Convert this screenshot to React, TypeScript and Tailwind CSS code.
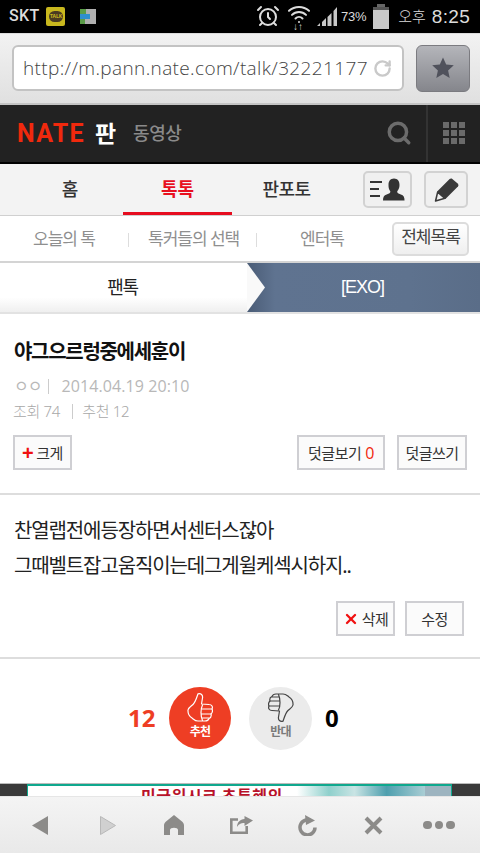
import React from "react";
import { AlarmClock, Wifi, RotateCw, X, Search } from "lucide-react";

const kr = "font-['Noto_Sans','Noto_Sans_CJK_KR',sans-serif]";

const thumb =
  "M11 .8C14 0 16 2 15.500 5L14.500 11L22 11.500C25 11.500 26 14 25 16C26 18 25 20 24 21C24.500 23 23.500 25 22 25.500C21.500 27 20.500 28 18 28L11 28C8 28 7 26.500 5 25C2.500 23.500 .8 20 1 17C1.500 14.500 4.500 13 6 11.500C8.500 9 9.500 5 11 .8z";
const fingers = "M15.500 12C13.500 16 13.500 23 15.500 27.500M15 16H25M14.500 21H24M15 25H22";

function StatusBar() {
  return (
    <div className="flex h-[33px] items-center bg-black pl-[9px] pr-[10px] text-[#dcdcdc]">
      <span className="font-['Roboto',sans-serif] text-[16px] font-medium leading-none tracking-[0.3px]">SKT</span>
      <div className="ml-[7px] flex h-[19px] w-[19px] items-center justify-center rounded-[2px] bg-[#c9b81e]">
        <div className="flex h-[11px] w-[14px] items-center justify-center rounded-full bg-[#4a3b22] text-[5px] font-bold leading-none text-[#c9b81e]">TALK</div>
      </div>
      <div className="ml-[15px] flex w-[16px] flex-col">
        <div className="h-[5px] bg-[linear-gradient(90deg,#5a9c48_40%,#b0b0b0_40%)]" />
        <div className="h-[5px] bg-[linear-gradient(90deg,#2f8fcf_60%,#b0b0b0_60%)]" />
        <div className="h-[5px] bg-[linear-gradient(90deg,#5a9c48_30%,#b0b0b0_30%)]" />
      </div>
      <div className="ml-auto flex items-center">
        <AlarmClock size={24} strokeWidth={2} className="text-[#dcdcdc]" />
        <div className="relative ml-[8px] h-[24px] w-[22px]">
          <Wifi size={24} strokeWidth={2} className="absolute -left-[1px] -top-[2px]" />
          <span className="absolute bottom-[-3px] left-[5px] text-[10px] font-bold leading-none">↓↑</span>
        </div>
        <svg width="20" height="22" viewBox="0 0 20 22" className="ml-[7px]">
          <path d="M0 21h3v-3zM5 21h4v-8l-4 4zM10.500 21h4V8l-4 4zM16.500 21h3.500V2l-3.500 4z" fill="#c8c8c8" />
        </svg>
        <span className="ml-[4px] font-['Liberation_Sans',sans-serif] text-[13px] leading-none tracking-[-0.3px]">73%</span>
        <div className="ml-[7px] flex flex-col items-center">
          <div className="h-[3px] w-[8px] bg-[#666]" />
          <div className="h-[22px] w-[16px] bg-[linear-gradient(180deg,#555_15%,#c9c9c9_15%)]" />
        </div>
        <span className={`ml-[9px] ${kr} text-[15px] font-light leading-none`}>오후</span>
        <span className="ml-[6px] font-['Liberation_Sans',sans-serif] text-[19px] leading-none tracking-[0.3px]">8:25</span>
      </div>
    </div>
  );
}

function UrlBar() {
  return (
    <div className="flex h-[72px] items-center gap-[12px] border-b-[2px] border-t-[1px] border-[#c4c4c4] border-t-[#dcdcdc] bg-[linear-gradient(180deg,#f2f2f2,#e0e0e0)] pl-[12px] pr-[10px]">
      <div className="flex h-[46px] min-w-0 flex-1 items-center rounded-[6px] border-2 border-[#c3c3c3] bg-white pl-[9px] pr-[10px]">
        <span className="flex-1 whitespace-nowrap font-['Open_Sans',sans-serif] text-[19px] font-light tracking-[0.37px] text-[#444]">http://m.pann.nate.com/talk/32221177</span>
        <RotateCw size={19} strokeWidth={3} className="shrink-0 text-[#c9c9c9]" />
      </div>
      <div className="flex h-[47px] w-[54px] items-center justify-center rounded-[6px] border border-[#7b7b80] bg-[linear-gradient(180deg,#b4b5ba,#85868c)]">
        <svg width="24" height="24" viewBox="0 0 24 24">
          <path d="M12 1.500l3.200 7 7.600.8-5.700 5.100 1.600 7.600-6.700-3.900L5.300 22l1.600-7.600L1.200 9.300l7.600-.8z" fill="#50525c" />
        </svg>
      </div>
    </div>
  );
}

function NateHeader() {
  return (
    <div className="flex h-[59px] items-center border-b-[2px] border-black bg-[#222222]">
      <span className="ml-[17px] font-['Roboto',sans-serif] text-[25px] font-bold leading-none tracking-[1.3px] text-[#f0290d]">NATE</span>
      <span className={`ml-[10px] ${kr} text-[23px] font-bold leading-none text-white`}>판</span>
      <span className={`ml-[17px] ${kr} text-[18px] font-medium leading-none tracking-[-0.5px] text-[#8a8a8a]`}>동영상</span>
      <Search size={26} strokeWidth={3.200} className="ml-auto text-[#6c6c6c]" />
      <div className="ml-[14px] flex h-full w-[54px] items-center justify-center border-l-[2px] border-[#333333]">
        <div className="grid grid-cols-3 gap-[2px]">
          {Array.from({ length: 9 }).map((_, i) => (
            <div key={i} className="h-[6px] w-[6px] bg-[#6a6a6a]" />
          ))}
        </div>
      </div>
    </div>
  );
}

function MainNav() {
  return (
    <div className="flex h-[52px] items-stretch border-b border-[#d0d0d0] bg-[#f3f3f3]">
      <div className={`flex w-[123px] items-center justify-center pl-[17px] ${kr} text-[18px] font-medium text-[#333]`}>홈</div>
      <div className={`flex w-[109px] items-center justify-center border-b-[3px] border-[#e60d1f] pt-[3px] ${kr} text-[18px] font-bold text-[#e8101f]`}>톡톡</div>
      <div className={`flex w-[109px] items-center justify-center ${kr} text-[18px] font-medium tracking-[-0.5px] text-[#333]`}>판포토</div>
      <div className="ml-[22px] mt-[7px] flex h-[37px] w-[49px] items-center justify-center gap-[1px] rounded-[5px] border-2 border-[#d2d2d2] bg-[#f0f0f0]">
        <div className="flex flex-col gap-[5px]">
          <div className="h-[2px] w-[12px] bg-[#333]" />
          <div className="h-[2px] w-[9px] bg-[#333]" />
          <div className="h-[2px] w-[10px] bg-[#333]" />
        </div>
        <svg width="22" height="25" viewBox="0 0 24 26">
          <path d="M12 1c4 0 6 3 6 7 0 3-1 5-2.500 7 0 2 1 2.500 4 3.500 3 1 4 3 4 6.500H0c0-3.500 1-5.500 4-6.500s4-1.500 4-3.500C6.500 13 6 11 6 8c0-4 2-7 6-7z" fill="#333" />
        </svg>
      </div>
      <div className="ml-[12px] mt-[7px] flex h-[37px] w-[44px] items-center justify-center rounded-[5px] border-2 border-[#d2d2d2] bg-[#f0f0f0]">
        <svg width="25" height="25" viewBox="0 0 24 24">
          <path d="M17 1.500L23 6.500Q24 8 23 9L11 21L3 14L15 2Q16 1 17 1.500z" fill="#3a3a3a" />
          <path d="M3.500 14.500L10.500 20.500L1.500 23z" fill="#eeeeee" stroke="#3a3a3a" strokeWidth="1.500" strokeLinejoin="round" />
        </svg>
      </div>
    </div>
  );
}

function SubNav() {
  return (
    <div className={`flex h-[48px] items-center border-b-[2px] border-[#d4d4d4] bg-white ${kr} text-[17px] tracking-[-1px] text-[#8f8f8f]`}>
      <span className="ml-[33px] w-[95px]">오늘의 톡</span>
      <div className="mt-[3px] h-[14px] w-px bg-[#dddddd]" />
      <span className="ml-[19px] w-[108px] whitespace-nowrap">톡커들의 선택</span>
      <div className="mt-[3px] h-[14px] w-px bg-[#dddddd]" />
      <span className="ml-[43px] w-[60px]">엔터톡</span>
      <div className="ml-auto mr-[11px] flex h-[34px] w-[77px] items-center justify-center rounded-[5px] border-2 border-[#dcdcdc] bg-[linear-gradient(180deg,#ffffff,#efefef)] pb-[3px] text-[17px] text-[#444]">전체목록</div>
    </div>
  );
}

function Breadcrumb() {
  return (
    <div className={`relative flex h-[51px] border-b-[2px] border-[#e2e2e2] ${kr}`}>
      <div className="flex w-[247px] items-center justify-center bg-[linear-gradient(180deg,#ffffff_70%,#efefef)] pr-[2px] text-[18px] tracking-[-1.3px] text-[#222]">팬톡</div>
      <div className="flex flex-1 items-center justify-center bg-[linear-gradient(90deg,#4a5c76,#5f7390_12%,#5e728e_70%,#5a6d88)] pr-[2px] font-['Liberation_Sans',sans-serif] text-[18px] tracking-[-1px] text-white">[EXO]</div>
      <svg width="22" height="49" viewBox="0 0 22 49" className="absolute left-[247px] top-0">
        <path d="M0 0L18 24.500L0 49z" fill="#f9f9f9" />
      </svg>
    </div>
  );
}

function Btn({ className, children }: { className: string; children: React.ReactNode }) {
  return (
    <div className={`flex h-[35px] items-center justify-center border-2 border-[#cfcfd3] bg-[#fbfbfb] ${kr} text-[15px] tracking-[-0.5px] text-[#333] ${className}`}>
      {children}
    </div>
  );
}

function Article() {
  return (
    <div className={`border-b-[2px] border-[#dddddd] px-[13px] pb-[23px] pt-[23px] ${kr}`}>
      <div className="ml-[1px] text-[20px] font-bold leading-[30px] tracking-[-1.3px] text-[#111]">야그으르렁중에세훈이</div>
      <div className="ml-[1px] mt-[9px] flex h-[20px] items-center text-[16px] text-[#b8b8b8]">
        <span className="text-[16px] tracking-[-1px]">ㅇㅇ</span>
        <div className="ml-[7px] h-[15px] w-px bg-[#cccccc]" />
        <span className="ml-[12px] font-['Open_Sans',sans-serif] tracking-[0.1px]">2014.04.19 20:10</span>
      </div>
      <div className="mt-[5px] flex h-[20px] items-center text-[15px] font-light tracking-[-0.3px] text-[#a8a8a8]">
        <span>조회 74</span>
        <div className="ml-[12px] h-[15px] w-px bg-[#cccccc]" />
        <span className="ml-[9px]">추천 12</span>
      </div>
      <div className="mt-[14px] flex">
        <Btn className="w-[59px] gap-[3px]">
          <span className="font-['Liberation_Sans',sans-serif] text-[20px] font-bold leading-none text-[#f01010]">+</span>
          <span>크게</span>
        </Btn>
        <Btn className="ml-auto w-[88px] gap-[4px]">
          <span>덧글보기</span>
          <span className="font-['Open_Sans',sans-serif] text-[16px] text-[#f0290d]">0</span>
        </Btn>
        <Btn className="ml-[12px] w-[70px]">덧글쓰기</Btn>
      </div>
    </div>
  );
}

function Body() {
  return (
    <div className={`border-b-[2px] border-[#dddddd] px-[14px] pb-[21px] pt-[18px] ${kr}`}>
      <p className="text-[20px] leading-[35px] tracking-[-1.120px] text-[#222]">찬열랩전에등장하면서센터스잖아</p>
      <p className="text-[20px] leading-[35px] tracking-[-1.120px] text-[#222]">그때벨트잡고움직이는데그게윌케섹시하지..</p>
      <div className="mt-[18px] flex justify-end pr-[2px]">
        <Btn className="w-[59px] gap-[3px]">
          <X size={16} strokeWidth={3.500} className="text-[#f01010]" />
          <span>삭제</span>
        </Btn>
        <Btn className="ml-[10px] w-[59px]">수정</Btn>
      </div>
    </div>
  );
}

function Vote() {
  return (
    <div className={`flex h-[124px] items-start pl-[128px] pt-[28px] ${kr}`}>
      <span className="mt-[17px] w-[27px] text-right font-['Open_Sans',sans-serif] text-[24px] font-bold leading-[28px] text-[#ee3e24]">12</span>
      <div className="ml-[14px] flex h-[62px] w-[62px] flex-col items-center rounded-full bg-[#ee3e24] pt-[6px]">
        <svg width="26" height="29" viewBox="0 0 26 29" fill="none" stroke="#fff" strokeWidth="1.200" strokeLinejoin="round" strokeLinecap="round">
          <path d={thumb} />
          <path d={fingers} />
        </svg>
        <span className="mt-[4px] text-[12px] font-bold leading-none tracking-[-0.8px] text-white">추천</span>
      </div>
      <div className="ml-[18px] flex h-[63px] w-[63px] flex-col items-center rounded-full bg-[#ebebeb] pt-[6px]">
        <svg width="26" height="29" viewBox="0 0 26 29" fill="none" stroke="#444" strokeWidth="1.200" strokeLinejoin="round" strokeLinecap="round">
          <g transform="rotate(180 13 14.500)">
            <path d={thumb} />
            <path d={fingers} />
          </g>
        </svg>
        <span className="mt-[4px] text-[12px] font-bold leading-none tracking-[-0.8px] text-[#7a7a7a]">반대</span>
      </div>
      <span className="ml-[13px] mt-[17px] font-['Open_Sans',sans-serif] text-[24px] font-bold leading-[28px] text-black">0</span>
    </div>
  );
}

function AdStrip() {
  return (
    <div className="flex h-[13px] overflow-hidden border-t border-[#bbbbbb] bg-[#3a3a3a]">
      <div className="relative ml-[27px] w-[425px] overflow-hidden border-x border-t-[2px] border-[#0fa88e] bg-white">
        <div className={`absolute left-[113px] top-0 ${kr} text-[16px] font-bold leading-[20px] tracking-[0.5px] text-[#b8122a]`}>미국워시크 초특혜의</div>
        <div className="absolute right-[26px] top-0 h-full w-[128px] bg-[linear-gradient(90deg,#ffffff,#8fd0cc_25%,#c9e4e4_45%,#4e9fae_70%,#a9cdd4)]" />
        <div className="absolute right-0 top-0 h-full w-[26px] bg-[#9db4c0]" />
      </div>
    </div>
  );
}

function Toolbar() {
  const c = "#8c8b89";
  return (
    <div className="flex h-[57px] items-center border-t border-[#e6e6e6] bg-[linear-gradient(180deg,#f4f4f4,#e9e9e9)] pl-[32px]">
      <svg width="16" height="19" viewBox="0 0 16 19"><path d="M16 0v19L0 9.500z" fill={c} /></svg>
      <svg width="16" height="19" viewBox="0 0 16 19" className="ml-[52px]"><path d="M.5 .5v18L15.500 9.500z" fill="#d0d0d0" stroke="#b8b8b8" /></svg>
      <svg width="20" height="20" viewBox="0 0 20 20" className="ml-[48px]"><path d="M10 0l8 6.500c1.500 1.500 2 2.500 2 4V20h-6v-5c0-3-8-3-8 0v5H0v-9.500c0-1.500.5-2.500 2-4z" fill={c} /></svg>
      <svg width="23" height="18" viewBox="0 0 23 18" fill="none" className="ml-[46px]">
        <path d="M8 3.500H1.300v13.200H16.700V10" stroke={c} strokeWidth="2.600" />
        <path d="M14.500 0L23 4.500l-8.500 5.500V7c-4 0-5.500 1-7.500 4 0-4.500 3-7.500 7.500-8z" fill={c} />
      </svg>
      <svg width="20" height="21" viewBox="0 0 20 21" fill="none" className="ml-[44px]">
        <path d="M13.500 5.500a7.500 7.500 0 1 0 4.500 7" stroke={c} strokeWidth="3.500" />
        <path d="M8 0l10 5.500-9 4.500z" fill={c} />
      </svg>
      <svg width="19" height="19" viewBox="0 0 19 19" fill="none" className="ml-[47px]">
        <path d="M2 2L17 17M17 2L2 17" stroke={c} strokeWidth="4" />
      </svg>
      <div className="ml-[40px] flex gap-[3px]">
        <div className="h-[8.500px] w-[8.500px] rounded-full bg-[#8c8b89]" />
        <div className="h-[8.500px] w-[8.500px] rounded-full bg-[#8c8b89]" />
        <div className="h-[8.500px] w-[8.500px] rounded-full bg-[#8c8b89]" />
      </div>
    </div>
  );
}

export default function App() {
  return (
    <div className="flex h-[853px] w-[480px] flex-col overflow-hidden bg-white">
      <StatusBar />
      <UrlBar />
      <NateHeader />
      <MainNav />
      <SubNav />
      <Breadcrumb />
      <Article />
      <Body />
      <Vote />
      <AdStrip />
      <Toolbar />
    </div>
  );
}
